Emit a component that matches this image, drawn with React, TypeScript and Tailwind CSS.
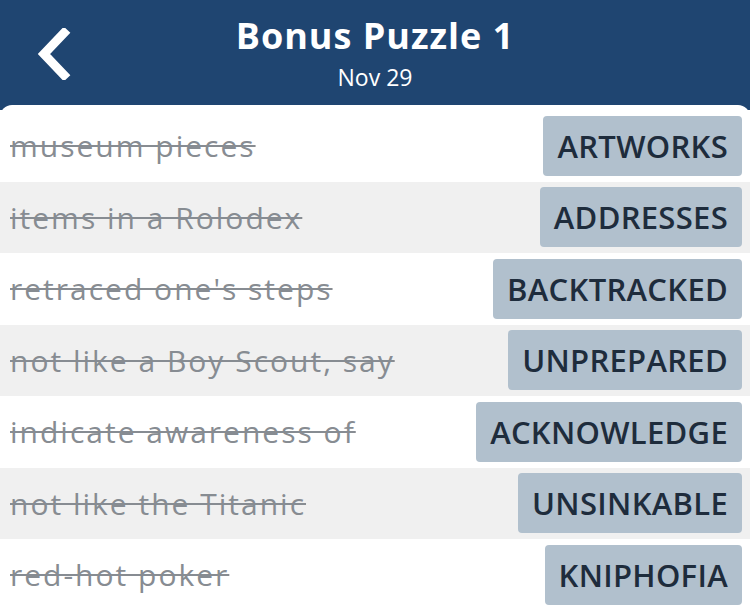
import React from 'react';

const clues = [
  { clue: 'museum pieces', answer: 'ARTWORKS' },
  { clue: 'items in a Rolodex', answer: 'ADDRESSES' },
  { clue: "retraced one's steps", answer: 'BACKTRACKED' },
  { clue: 'not like a Boy Scout, say', answer: 'UNPREPARED' },
  { clue: 'indicate awareness of', answer: 'ACKNOWLEDGE' },
  { clue: 'not like the Titanic', answer: 'UNSINKABLE' },
  { clue: 'red-hot poker', answer: 'KNIPHOFIA' },
];

const App = () => {
  return (
    <div className="w-[750px] h-[608px] overflow-hidden bg-[#1f4571] font-['Open_Sans',sans-serif]">
      <div className="relative h-[105px] flex flex-col items-center text-white">
        <button className="absolute left-[34px] top-[28px] w-[40px] h-[52px]">
          <svg viewBox="0 0 40 52" className="w-full h-full">
            <path d="M30 5 L10 26 L30 47" fill="none" stroke="white" strokeWidth="9" strokeLinecap="square" />
          </svg>
        </button>
        <h1 className="mt-[12px] text-[36px] leading-[48px] font-bold tracking-[1px]">Bonus Puzzle 1</h1>
        <p className="mt-[2px] text-[23px] leading-[30px]">Nov 29</p>
      </div>

      <div className="bg-white rounded-t-[12px] pt-[5px] h-[503px]">
        {clues.map((c, i) => (
          <div
            key={c.answer}
            className={`flex items-center justify-between h-[71.5px] pl-[10px] pr-[8px] ${i % 2 === 1 ? 'bg-[#f0f0f0]' : 'bg-white'}`}
          >
            <span className="text-[30px] tracking-[2px] text-[#878c92] line-through decoration-[2px]">{c.clue}</span>
            <span className="h-[60px] flex items-center px-[14px] rounded-[4px] bg-[#b1c0cd] text-[31px] font-semibold tracking-[0.3px] text-[#1e2c3c]">
              {c.answer}
            </span>
          </div>
        ))}
      </div>
    </div>
  );
};

export default App;
